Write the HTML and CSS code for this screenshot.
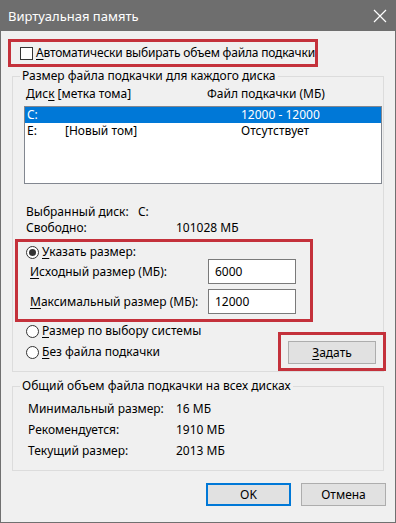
FILE: index.html
```html
<!DOCTYPE html>
<html lang="ru">
<head>
    <meta charset="UTF-8">
    <meta name="viewport" content="width=device-width, initial-scale=1.0">
    <title>Виртуальная память</title>
    <link rel="stylesheet" href="styles.css">
</head>
<body>
    <div class="window">
        <div class="titlebar">
            <span class="title">Виртуальная память</span>
            <svg class="close" width="14" height="14" viewBox="0 0 14 14">
                <path d="M1 1L13 13M13 1L1 13" stroke="#fff" stroke-width="1.2" fill="none"/>
            </svg>
        </div>
        <div class="content">
            <div class="mark auto-box">
                <div class="check-row">
                    <span class="checkbox"></span>
                    <span class="auto-text"><u>А</u>втоматически выбирать объем файла подкачки</span>
                </div>
            </div>

            <fieldset class="group drives">
                <legend>Размер файла подкачки для каждого диска</legend>
                <div class="list-head">
                    <span class="col-drive">Дис<u>к</u> [метка тома]</span>
                    <span>Файл подкачки (МБ)</span>
                </div>
                <div class="listbox">
                    <div class="list-row selected">
                        <span class="c-letter">C:</span>
                        <span class="c-label"></span>
                        <span>12000 - 12000</span>
                    </div>
                    <div class="list-row">
                        <span class="c-letter">E:</span>
                        <span class="c-label">[Новый том]</span>
                        <span>Отсутствует</span>
                    </div>
                </div>

                <div class="info-row first">
                    <span class="info-label sel">Выбранный диск:</span>
                    <span>C:</span>
                </div>
                <div class="info-row second">
                    <span class="info-label free">Свободно:</span>
                    <span>101028 МБ</span>
                </div>

                <div class="mark custom-box">
                    <div class="radio-row top">
                        <span class="radio checked"></span>
                        <span><u>У</u>казать размер:</span>
                    </div>
                    <div class="size-row">
                        <span class="size-label"><u>И</u>сходный размер (МБ):</span>
                        <input class="size-input" type="text" value="6000">
                    </div>
                    <div class="size-row">
                        <span class="size-label"><u>М</u>аксимальный размер (МБ):</span>
                        <input class="size-input" type="text" value="12000">
                    </div>
                </div>

                <div class="bottom-row">
                    <div class="radio-col">
                        <div class="radio-row">
                            <span class="radio"></span>
                            <span><u>Р</u>азмер по выбору системы</span>
                        </div>
                        <div class="radio-row">
                            <span class="radio"></span>
                            <span><u>Б</u>ез файла подкачки</span>
                        </div>
                    </div>
                    <div class="mark set-box">
                        <button class="btn set-btn" type="button"><u>З</u>адать</button>
                    </div>
                </div>
            </fieldset>

            <fieldset class="group total">
                <legend>Общий объем файла подкачки на всех дисках</legend>
                <div class="total-row">
                    <span class="total-label">Минимальный размер:</span>
                    <span>16 МБ</span>
                </div>
                <div class="total-row">
                    <span class="total-label">Рекомендуется:</span>
                    <span>1910 МБ</span>
                </div>
                <div class="total-row">
                    <span class="total-label">Текущий размер:</span>
                    <span>2013 МБ</span>
                </div>
            </fieldset>

            <div class="actions">
                <button class="btn default" type="button">OK</button>
                <button class="btn" type="button">Отмена</button>
            </div>
        </div>
    </div>
</body>
</html>
```

FILE: styles.css
```css
* {
    box-sizing: border-box;
}
body {
    margin: 0;
    background: #f0f0f0;
    font-family: "Noto Sans", "Open Sans", sans-serif;
    font-size: 12px;
    line-height: 16px;
    color: #000;
}
u {
    text-decoration: underline;
    text-underline-offset: 2px;
}
.window {
    width: 396px;
    height: 523px;
    border: 1px solid #707070;
    border-top: none;
    background: #f0f0f0;
}
.titlebar {
    height: 31px;
    background: #6e6e6e;
    color: #fff;
    display: flex;
    align-items: center;
    justify-content: space-between;
    padding: 0 9px 0 8px;
    margin: 0 -1px;
}
.title {
    font-size: 13px;
}
.close {
    display: block;
}
.content {
    padding: 0 9px 0 11px;
}

/* red annotation frames */
.mark {
    border: 3px solid #c4313b;
}
.auto-box {
    margin: 8px 0 0 -4px;
    width: 310px;
    height: 28px;
    padding: 0 0 0 9px;
    display: flex;
    align-items: center;
}
.check-row {
    display: flex;
    align-items: center;
}
.auto-text {
    white-space: nowrap;
    letter-spacing: -0.2px;
}
.checkbox {
    flex: none;
    width: 13px;
    height: 13px;
    border: 1px solid #333;
    background: #fff;
    margin-right: 3px;
}

/* group boxes */
.group {
    margin: 0 2px 0 0;
    padding: 0;
    border: 1px solid #dcdcdc;
    min-width: 0;
}
.group legend {
    margin-left: 7px;
    padding: 0 2px;
    line-height: 16px;
}
.drives {
    margin-top: 1px;
}
.list-head {
    display: flex;
    margin: 2px 0 0 13px;
}
.col-drive {
    width: 181px;
}
.listbox {
    margin: 4px 0 0 11px;
    width: 358px;
    height: 78px;
    border: 1px solid #828790;
    background: #fff;
}
.list-row {
    display: flex;
    height: 16px;
    padding-left: 2px;
}
.list-row.selected {
    background: #0078d7;
    color: #fff;
}
.c-letter {
    width: 38px;
}
.c-label {
    width: 176px;
}
.info-row {
    display: flex;
    margin-left: 13px;
    line-height: 15px;
}
.info-row.first {
    margin-top: 20px;
}
.info-row.second {
    margin-top: 1px;
}
.info-label.sel {
    width: 112px;
}
.info-label.free {
    width: 150px;
}

.custom-box {
    margin: 4px 0 0 2px;
    width: 298px;
    padding: 3px 0 5px 8px;
}
.radio-row {
    display: flex;
    align-items: center;
    height: 16px;
}
.radio-row.top {
    height: 14px;
}
.radio {
    flex: none;
    width: 13px;
    height: 13px;
    border: 1px solid #333;
    border-radius: 50%;
    background: #fff;
    margin-right: 3px;
    display: flex;
    align-items: center;
    justify-content: center;
}
.radio.checked::after {
    content: "";
    width: 7px;
    height: 7px;
    border-radius: 50%;
    background: #333;
}
.size-row {
    display: flex;
    align-items: center;
    height: 25px;
    padding-left: 4px;
    margin-top: 5px;
}
.size-row:nth-child(2) {
    margin-top: 0;
}
.size-label {
    width: 178px;
}
.size-input {
    width: 88px;
    height: 25px;
    border: 1px solid #7a7a7a;
    background: #fff;
    padding: 0 0 0 6px;
    font: inherit;
    color: #000;
}

.bottom-row {
    display: flex;
    align-items: flex-start;
}
.radio-col {
    margin: 1px 0 0 13px;
    display: flex;
    flex-direction: column;
    gap: 5px;
}
.set-box {
    margin: 10px -3px 0 auto;
    width: 108px;
    height: 39px;
    padding: 6px 7px 4px 7px;
}
.btn {
    display: block;
    height: 23px;
    width: 85px;
    border: 1px solid #adadad;
    background: #e1e1e1;
    font: inherit;
    color: #000;
    padding: 0;
}
.set-btn {
    width: 88px;
}

.total {
    margin-top: 6px;
    padding-bottom: 11px;
}
.total-row {
    display: flex;
    margin: 5px 0 0 15px;
}
.total-row:first-of-type {
    margin-top: 7px;
}
.total-label {
    width: 148px;
}

.actions {
    display: flex;
    justify-content: flex-end;
    gap: 10px;
    margin-top: 12px;
}
.btn.default {
    border: 2px solid #0078d7;
}
```
